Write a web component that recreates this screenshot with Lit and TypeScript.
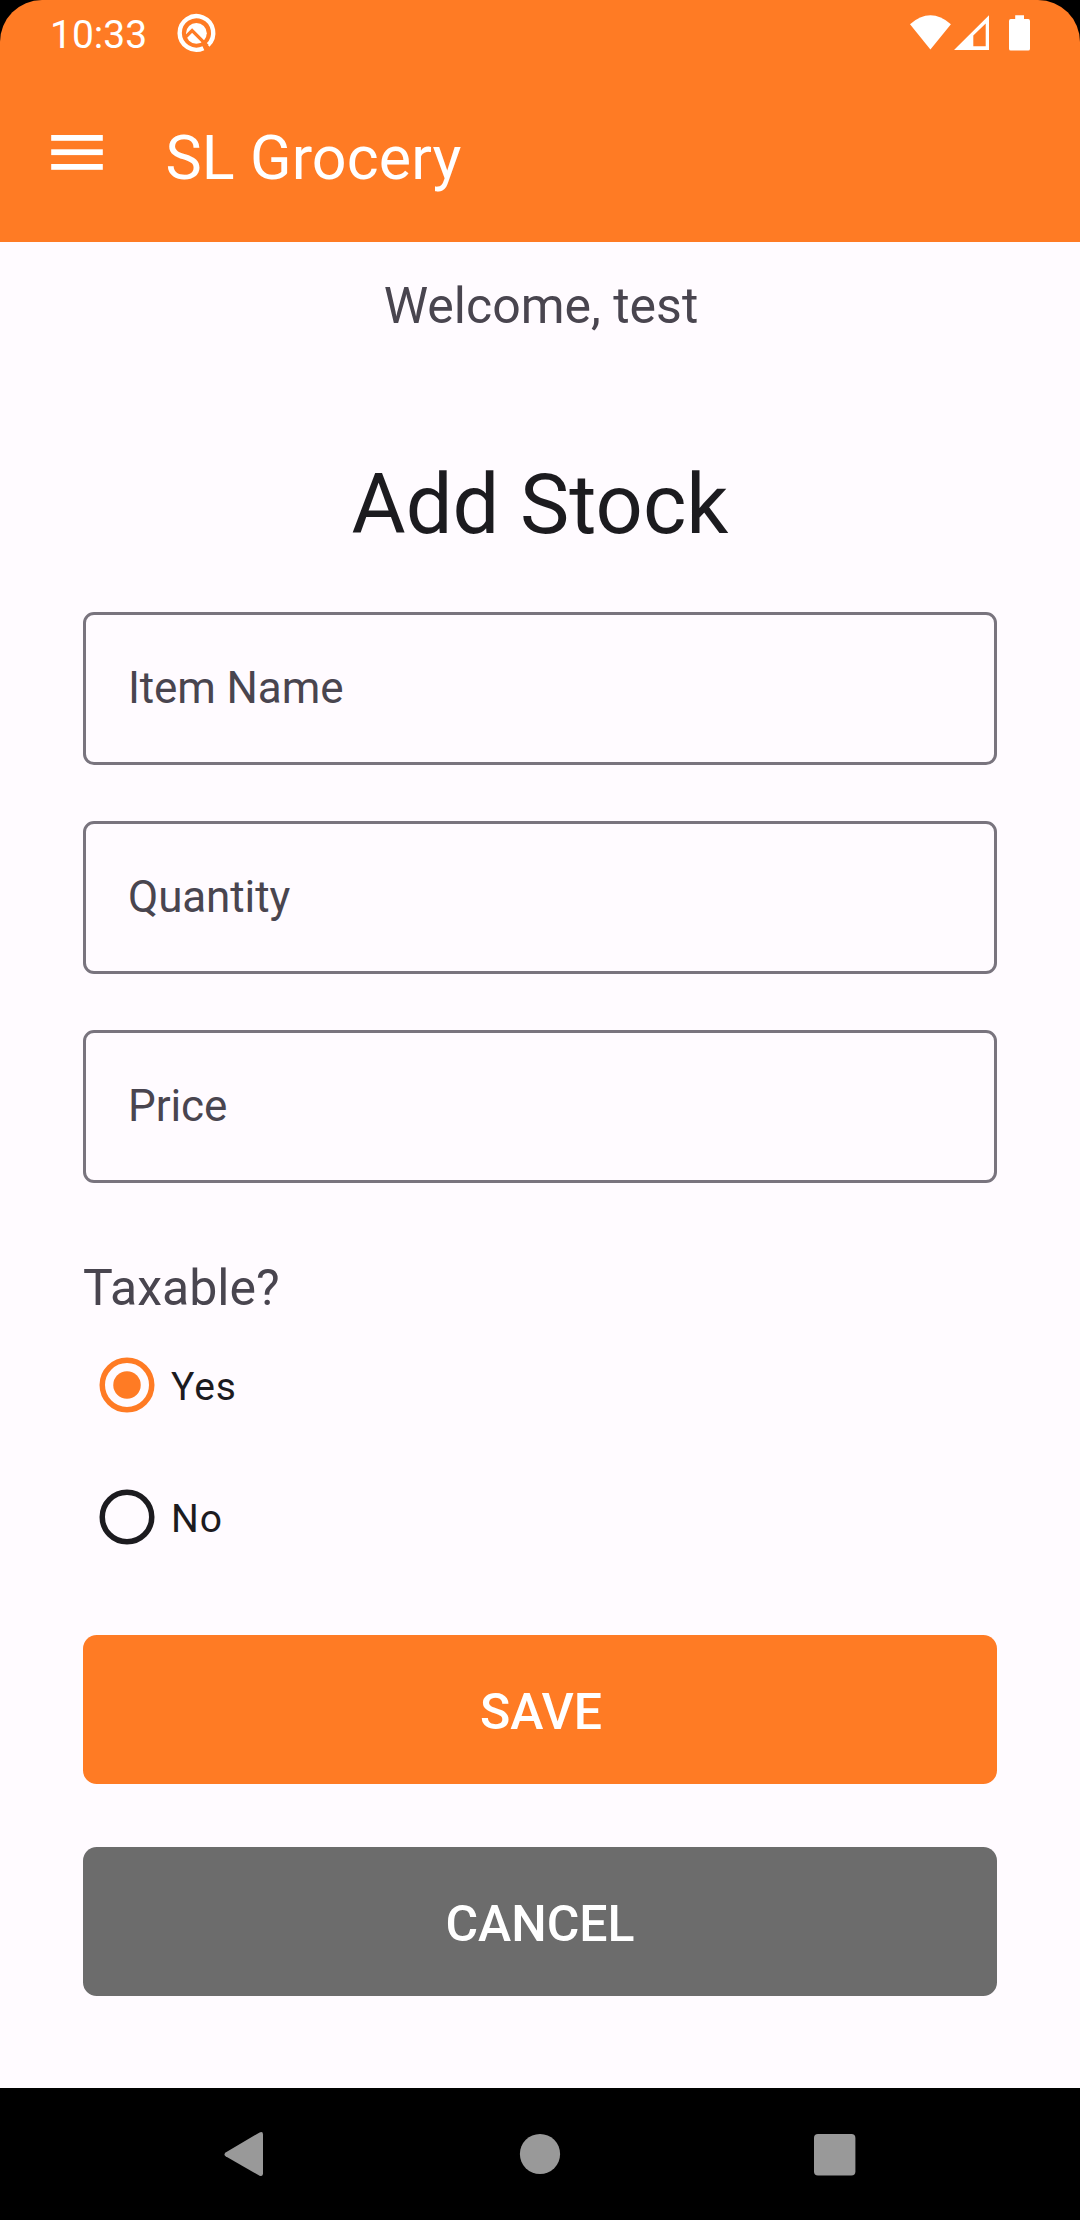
import { LitElement, html, css } from "lit";
import { customElement, property, state } from "lit/decorators.js";

@customElement("status-bar")
class StatusBar extends LitElement {
  static styles = css`
    :host {
      display: flex;
      height: 66px;
      box-sizing: border-box;
      padding: 0 50px;
      color: #fff;
      justify-content: space-between;
    }
    .side {
      display: flex;
    }
    .clock {
      font-size: 39px;
      line-height: 70px;
      height: 66px;
      width: 122px;
      white-space: nowrap;
    }
    svg {
      display: block;
      fill: #fff;
    }
    .ring {
      fill: none;
      stroke: #fff;
      stroke-width: 4.4px;
    }
    .peak {
      fill: none;
      stroke: #ff7b24;
      stroke-width: 3.2px;
    }
  `;

  render() {
    return html`
      <div class="side">
        <span class="clock">10:33</span>
        <svg width="50" height="66" viewBox="172 0 50 66">
          <path class="ring" d="M208 45.1 A16.8 16.8 0 1 0 203.4 48.2" />
          <circle cx="196.4" cy="33.3" r="10.4" />
          <path class="peak" d="M185.6 37 L192.1 30.6 L207.4 45.8" />
        </svg>
      </div>
      <svg width="122" height="66" viewBox="908 0 122 66">
        <path d="M910 24.2 Q930.4 6.4 950.9 24.2 L930.4 49.6 Z" />
        <path
          fill-rule="evenodd"
          d="M954 50 L989 15.2 V50 Z M973.3 35.4 V46.2 H985.7 V23.4 Z"
        />
        <path
          d="M1015.2 15.3 H1024 V19 H1028.2 Q1030 19 1030 21 V48.7 Q1030 50.6 1028.2 50.6 H1010.8 Q1009 50.6 1009 48.7 V21 Q1009 19 1010.8 19 H1015.2 Z"
        />
      </svg>
    `;
  }
}

@customElement("app-bar")
class AppBar extends LitElement {
  @property() heading = "";

  static styles = css`
    :host {
      display: flex;
      height: 176px;
      box-sizing: border-box;
      padding-left: 51px;
      color: #fff;
    }
    svg {
      display: block;
      fill: #fff;
    }
    .title {
      margin: 0 0 0 62.5px;
      padding-top: 51px;
      font-size: 61px;
      line-height: 82px;
      font-weight: 400;
      letter-spacing: 0.1px;
      white-space: nowrap;
    }
  `;

  render() {
    return html`
      <svg width="52" height="176" viewBox="51 66 52 176">
        <rect x="51.2" y="135" width="51.6" height="5.8" />
        <rect x="51.2" y="149.3" width="51.6" height="5.8" />
        <rect x="51.2" y="164" width="51.6" height="5.8" />
      </svg>
      <h1 class="title">${this.heading}</h1>
    `;
  }
}

@customElement("text-field")
class TextField extends LitElement {
  @property() label = "";

  static styles = css`
    :host {
      display: flex;
      align-items: center;
      height: 153px;
      box-sizing: border-box;
      border: 3px solid #79747e;
      border-radius: 11px;
      padding: 0 0 2px 42px;
      font-size: 44px;
      line-height: 54px;
      letter-spacing: -0.12px;
      color: #49454f;
    }
  `;

  render() {
    return html`<span>${this.label}</span>`;
  }
}

@customElement("radio-option")
class RadioOption extends LitElement {
  @property() label = "";
  @property({ type: Boolean }) checked = false;

  static styles = css`
    :host {
      display: flex;
      align-items: center;
      height: 132px;
      padding-left: 16px;
      gap: 16px;
      font-size: 39px;
      letter-spacing: 1px;
      color: #1c1b1f;
    }
    svg {
      display: block;
    }
    .ring {
      fill: none;
      stroke: #1c1b1f;
      stroke-width: 5.5px;
    }
    .ring.on {
      stroke: #ff7b24;
    }
    .label {
      padding-top: 3px;
      line-height: 46px;
    }
  `;

  render() {
    return html`
      <svg width="56" height="56" viewBox="0 0 56 56">
        <circle class="ring ${this.checked ? "on" : ""}" cx="28" cy="28" r="24.75" />
        <circle cx="28" cy="28" r="13.75" fill=${this.checked ? "#ff7b24" : "none"} />
      </svg>
      <span class="label">${this.label}</span>
    `;
  }
}

@customElement("app-root")
class AppRoot extends LitElement {
  @state() private fields = ["Item Name", "Quantity", "Price"];
  @state() private taxable = "Yes";

  static styles = css`
    :host {
      display: block;
      background: #000;
      font-family: Roboto, sans-serif;
    }
    .screen {
      display: flex;
      flex-direction: column;
      width: 1080px;
      height: 2220px;
      overflow: hidden;
    }
    .top {
      background: #ff7b24;
      border-radius: 42px 42px 0 0;
    }
    .content {
      flex: 1;
      display: flex;
      flex-direction: column;
      box-sizing: border-box;
      padding: 33px 83px 0;
      background: #fffbff;
    }
    .welcome,
    .heading {
      margin: 0;
      text-align: center;
      font-weight: 400;
    }
    .welcome {
      padding-left: 2px;
      font-size: 50px;
      line-height: 62px;
      color: #49454f;
    }
    .heading {
      margin-top: 118px;
      font-size: 83px;
      line-height: 100px;
      color: #1c1b1f;
    }
    .fields {
      display: flex;
      flex-direction: column;
      gap: 56px;
      margin-top: 57px;
    }
    .question {
      margin: 74px 0 0;
      font-size: 50px;
      line-height: 62px;
      color: #49454f;
    }
    .actions {
      display: flex;
      flex-direction: column;
      gap: 63px;
      margin-top: 52px;
    }
    .action {
      height: 149px;
      border: 0;
      border-radius: 13.75px;
      padding: 5px 0 0;
      font: 500 50px/60px Roboto, sans-serif;
      color: #fff;
    }
    .save {
      padding-left: 2px;
      background: #ff7b24;
    }
    .cancel {
      background: #6c6c6c;
    }
    .nav {
      display: flex;
      align-items: center;
      justify-content: space-between;
      box-sizing: border-box;
      height: 132px;
      padding: 0 224px;
      background: #000;
    }
    .nav svg {
      display: block;
      fill: #999;
    }
  `;

  render() {
    return html`
      <div class="screen">
        <header class="top">
          <status-bar></status-bar>
          <app-bar heading="SL Grocery"></app-bar>
        </header>
        <main class="content">
          <p class="welcome">Welcome, test</p>
          <h2 class="heading">Add Stock</h2>
          <div class="fields">
            ${this.fields.map((f) => html`<text-field label=${f}></text-field>`)}
          </div>
          <p class="question">Taxable?</p>
          <div>
            ${["Yes", "No"].map(
              (o) => html`<radio-option
                label=${o}
                ?checked=${this.taxable === o}
                @click=${() => (this.taxable = o)}
              ></radio-option>`
            )}
          </div>
          <div class="actions">
            <button class="action save">SAVE</button>
            <button class="action cancel">CANCEL</button>
          </div>
        </main>
        <nav class="nav">
          <svg width="40" height="46" viewBox="0 0 40 46">
            <path d="M1.6 21.6 L35.6 1.4 Q39 .1 39 3.5 V42.6 Q39 46 35.6 44.7 L1.6 25.2 Q-.6 23.4 1.6 21.6 Z" />
          </svg>
          <svg width="44" height="42" viewBox="0 0 44 42"><circle cx="23" cy="21" r="20.1" /></svg>
          <svg width="42" height="44" viewBox="0 0 42 44"><rect x="0" y="2" width="41.4" height="41.4" rx="4" /></svg>
        </nav>
      </div>
    `;
  }
}
